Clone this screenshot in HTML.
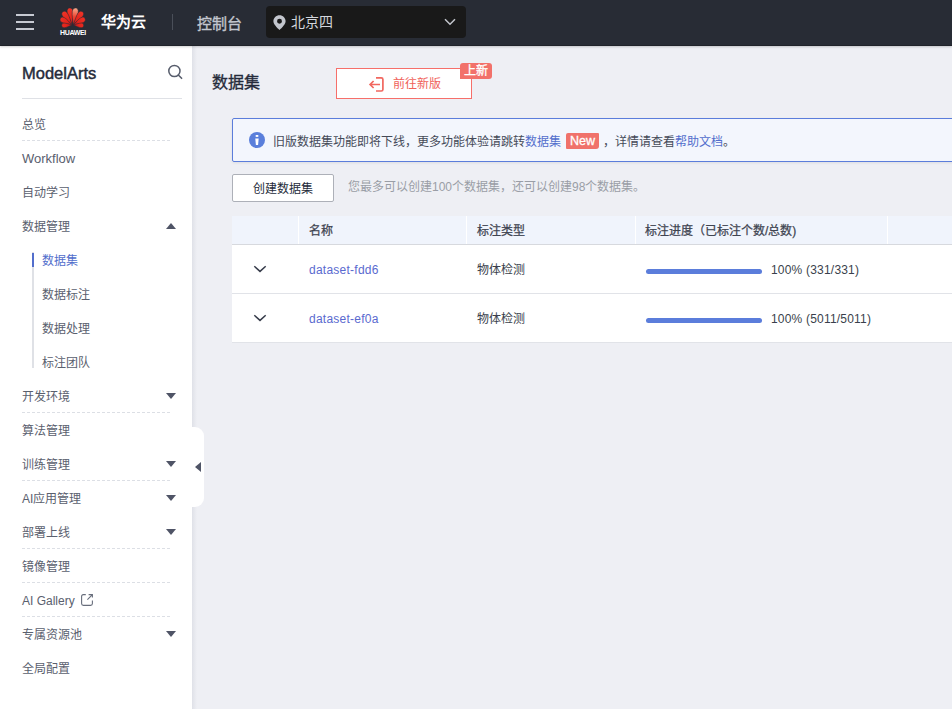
<!DOCTYPE html>
<html lang="zh-CN"><head><meta charset="utf-8">
<style>
*{margin:0;padding:0;box-sizing:border-box;}
html,body{width:952px;height:709px;overflow:hidden;}
body{font-family:"Liberation Sans",sans-serif;background:#eeeff4;position:relative;color:#252b3a;font-size:12px;}
.abs{position:absolute;white-space:nowrap;}
#hdr{position:absolute;left:0;top:0;width:952px;height:46px;background:#282c35;border-bottom:1px solid #20232a;box-shadow:0 1px 2px rgba(0,0,0,.18);z-index:5;}
#side{position:absolute;left:0;top:45px;width:192px;height:664px;background:#fff;z-index:3;}
#shadow{position:absolute;left:192px;top:45px;width:5px;height:664px;background:linear-gradient(to right,rgba(30,40,70,.07),rgba(30,40,70,0));z-index:2;}
.mi{position:absolute;white-space:nowrap;left:22px;font-size:12px;color:#5a606e;line-height:16px;}
.sub{left:42px;}
.dash{position:absolute;left:22px;width:148px;height:1px;background-image:linear-gradient(to right,#dcdfe5 60%,transparent 60%);background-size:5px 1px;}
.tri{position:absolute;left:166px;width:0;height:0;border-left:5px solid transparent;border-right:5px solid transparent;border-top:6px solid #4f5466;}
.triu{border-top:none;border-bottom:6px solid #4f5466;}
</style></head>
<body>
<div id="hdr">
  <div class="abs" style="left:16px;top:14px;width:18px;height:2px;background:#c7cad2;"></div>
  <div class="abs" style="left:16px;top:21px;width:18px;height:2px;background:#c7cad2;"></div>
  <div class="abs" style="left:16px;top:28px;width:18px;height:2px;background:#c7cad2;"></div>
  <svg class="abs" style="left:58px;top:6px;" width="30" height="23" viewBox="-14.7 -19 30 23">
    <defs>
      <linearGradient id="pg" x1="0" y1="-18" x2="0" y2="2" gradientUnits="userSpaceOnUse"><stop offset="0" stop-color="#f0382a"/><stop offset="0.6" stop-color="#e3231b"/><stop offset="1" stop-color="#b5121a"/></linearGradient>
      <linearGradient id="pt" x1="0" y1="-18" x2="0" y2="0" gradientUnits="userSpaceOnUse"><stop offset="0" stop-color="#f7b595"/><stop offset="0.55" stop-color="#ee4330"/><stop offset="1" stop-color="#dc2119"/></linearGradient>
    </defs>
    <g fill="url(#pg)" stroke="#282c35" stroke-width="0.5">
      <path d="M0,0 C-1.20,-5.16 -3.00,-9.46 -3.00,-13.07 C-3.00,-16.34 -1.35,-17.20 0,-17.20 C1.35,-17.20 3.00,-16.34 3.00,-13.07 C3.00,-9.46 1.20,-5.16 0,0Z" transform="translate(-0.5,0) rotate(-9)"/>
      <path d="M0,0 C-1.20,-5.16 -3.00,-9.46 -3.00,-13.07 C-3.00,-16.34 -1.35,-17.20 0,-17.20 C1.35,-17.20 3.00,-16.34 3.00,-13.07 C3.00,-9.46 1.20,-5.16 0,0Z" transform="translate(0.5,0) rotate(9)" fill="url(#pt)"/>
      <path d="M0,0 C-1.16,-4.86 -2.90,-8.91 -2.90,-12.31 C-2.90,-15.39 -1.30,-16.20 0,-16.20 C1.30,-16.20 2.90,-15.39 2.90,-12.31 C2.90,-8.91 1.16,-4.86 0,0Z" transform="translate(-0.5,0) rotate(-35)"/>
      <path d="M0,0 C-1.16,-4.86 -2.90,-8.91 -2.90,-12.31 C-2.90,-15.39 -1.30,-16.20 0,-16.20 C1.30,-16.20 2.90,-15.39 2.90,-12.31 C2.90,-8.91 1.16,-4.86 0,0Z" transform="translate(0.5,0) rotate(35)"/>
      <path d="M0,0 C-1.08,-4.05 -2.70,-7.43 -2.70,-10.26 C-2.70,-12.82 -1.22,-13.50 0,-13.50 C1.22,-13.50 2.70,-12.82 2.70,-10.26 C2.70,-7.43 1.08,-4.05 0,0Z" transform="translate(-0.5,0) rotate(-61)"/>
      <path d="M0,0 C-1.08,-4.05 -2.70,-7.43 -2.70,-10.26 C-2.70,-12.82 -1.22,-13.50 0,-13.50 C1.22,-13.50 2.70,-12.82 2.70,-10.26 C2.70,-7.43 1.08,-4.05 0,0Z" transform="translate(0.5,0) rotate(61)"/>
      <path d="M0,0 C-0.92,-3.15 -2.30,-5.78 -2.30,-7.98 C-2.30,-9.97 -1.03,-10.50 0,-10.50 C1.03,-10.50 2.30,-9.97 2.30,-7.98 C2.30,-5.78 0.92,-3.15 0,0Z" transform="translate(-0.5,0) rotate(-93)"/>
      <path d="M0,0 C-0.92,-3.15 -2.30,-5.78 -2.30,-7.98 C-2.30,-9.97 -1.03,-10.50 0,-10.50 C1.03,-10.50 2.30,-9.97 2.30,-7.98 C2.30,-5.78 0.92,-3.15 0,0Z" transform="translate(0.5,0) rotate(93)"/>
    </g>
  </svg>
  <div class="abs" style="left:59px;top:29px;width:28px;text-align:center;font-size:7px;font-weight:bold;color:#fff;line-height:8px;letter-spacing:-0.35px;">HUAWEI</div>
  <div class="abs" style="left:101px;top:12px;font-size:15px;font-weight:bold;color:#fff;line-height:20px;">华为云</div>
  <div class="abs" style="left:172px;top:14px;width:1px;height:16px;background:#4a4f59;"></div>
  <div class="abs" style="left:197px;top:14px;font-size:15px;font-weight:500;-webkit-text-stroke:0.35px #c3c7cf;color:#c3c7cf;line-height:20px;">控制台</div>
  <div class="abs" style="left:266px;top:6px;width:200px;height:32px;background:#191919;border-radius:4px;">
    <svg class="abs" style="left:7px;top:8.5px;" width="13" height="15" viewBox="0 0 12 14"><path d="M6,0.2 C2.8,0.2 0.3,2.7 0.3,5.8 C0.3,9.2 6,13.9 6,13.9 C6,13.9 11.7,9.2 11.7,5.8 C11.7,2.7 9.2,0.2 6,0.2Z M6,3.5 A2.3,2.3 0 1 1 6,8.1 A2.3,2.3 0 1 1 6,3.5Z" fill="#c3c6cd" fill-rule="evenodd"/></svg>
    <div class="abs" style="left:25px;top:6px;font-size:14px;color:#d3d6dc;line-height:20px;">北京四</div>
    <svg class="abs" style="left:178px;top:12px;" width="12" height="8" viewBox="0 0 12 8"><path d="M1,1.2 L6,6.2 L11,1.2" fill="none" stroke="#c3c6cd" stroke-width="1.5"/></svg>
  </div>
</div>

<div id="side">
  <div class="abs" style="left:22px;top:18px;font-size:16.5px;-webkit-text-stroke:0.45px #252b3a;color:#252b3a;line-height:20px;">ModelArts</div>
  <svg class="abs" style="left:166px;top:19px;" width="17" height="17" viewBox="0 0 17 17"><circle cx="8.4" cy="7" r="5.6" fill="none" stroke="#575d6c" stroke-width="1.5"/><path d="M12.3,11 L15.6,14.3" stroke="#575d6c" stroke-width="1.6" stroke-linecap="round"/></svg>
  <div class="abs" style="left:22px;top:53px;width:160px;height:1px;background:#dfe1e6;"></div>
</div>
<div id="shadow"></div>
<div style="position:absolute;left:0;top:0;z-index:4">
<div class="mi" style="top:117px;">总览</div>
<div class="dash" style="top:140px;"></div>
<div class="mi" style="top:151px;font-size:13px;">Workflow</div>
<div class="mi" style="top:185px;">自动学习</div>
<div class="mi" style="top:219px;">数据管理</div>
<div class="tri triu" style="top:223px;"></div>
<div class="mi sub" style="top:253px;color:#526ecc;">数据集</div>
<div class="mi sub" style="top:287px;">数据标注</div>
<div class="mi sub" style="top:321px;">数据处理</div>
<div class="mi sub" style="top:355px;">标注团队</div>
<div class="mi" style="top:389px;">开发环境</div>
<div class="tri" style="top:393px;"></div>
<div class="dash" style="top:412px;"></div>
<div class="mi" style="top:423px;">算法管理</div>
<div class="mi" style="top:457px;">训练管理</div>
<div class="tri" style="top:461px;"></div>
<div class="dash" style="top:480px;"></div>
<div class="mi" style="top:491px;">AI应用管理</div>
<div class="tri" style="top:495px;"></div>
<div class="mi" style="top:525px;">部署上线</div>
<div class="tri" style="top:529px;"></div>
<div class="dash" style="top:548px;"></div>
<div class="mi" style="top:559px;">镜像管理</div>
<div class="dash" style="top:582px;"></div>
<div class="mi" style="top:593px;">AI Gallery</div><svg class="abs" style="left:81px;top:594px;" width="12" height="12" viewBox="0 0 12 12"><path d="M4.8,0.6 H2.4 Q0.6,0.6 0.6,2.4 V9.6 Q0.6,11.4 2.4,11.4 H9.6 Q11.4,11.4 11.4,9.6 V6.6" fill="none" stroke="#686e7c" stroke-width="1.1"/><path d="M7.6,0.6 H11.4 V3.6 M11.4,0.6 L6.4,5.6" fill="none" stroke="#686e7c" stroke-width="1.1"/></svg>
<div class="dash" style="top:616px;"></div>
<div class="mi" style="top:627px;">专属资源池</div>
<div class="tri" style="top:631px;"></div>
<div class="mi" style="top:661px;">全局配置</div>
</div>
<div class="abs" style="left:32px;top:252px;width:2px;height:116px;background:#dfe1e6;z-index:4"></div>
<div class="abs" style="left:32px;top:253px;width:2px;height:14px;background:#526ecc;z-index:4"></div>
<div class="abs" style="left:186px;top:427px;width:18px;height:80px;background:#fff;border-radius:0 9px 9px 0;z-index:4"></div>
<div class="abs" style="left:195px;top:462px;width:0;height:0;border-top:5px solid transparent;border-bottom:5px solid transparent;border-right:6px solid #4f5466;z-index:4"></div>

<div id="main" style="position:absolute;left:0;top:0;z-index:1;">
  <div class="abs" style="left:212px;top:72px;font-size:16px;font-weight:500;-webkit-text-stroke:0.35px #252b3a;color:#252b3a;line-height:22px;">数据集</div>
  <div class="abs" style="left:336px;top:68px;width:136px;height:31px;border:1px solid #f66f6a;background:#fff;"></div>
  <svg class="abs" style="left:368px;top:76px;" width="16" height="16" viewBox="0 0 16 16"><path d="M8,1.9 H13.3 Q14.9,1.9 14.9,3.5 V13.4 Q14.9,15 13.3,15 H8" fill="none" stroke="#f1675f" stroke-width="1.7"/><path d="M12,8.5 H2.2 M5.6,5 L2.1,8.5 L5.6,12" fill="none" stroke="#f1675f" stroke-width="1.7"/></svg>
  <div class="abs" style="left:393px;top:76px;font-size:12px;color:#f0625a;line-height:16px;">前往新版</div>
  <div class="abs" style="left:460px;top:63px;width:32px;height:16px;background:#f2716a;border-radius:3px 3px 3px 0;color:#fff;font-size:12px;-webkit-text-stroke:0.3px #fff;line-height:16px;text-align:center;">上新</div>

  <div class="abs" style="left:232px;top:118px;width:740px;height:44px;border:1px solid #5b7ddb;background:#f3f6fd;border-radius:2px;box-shadow:0 1px 3px rgba(0,0,0,.08);">
    <svg class="abs" style="left:16px;top:13px;" width="16" height="16" viewBox="0 0 16 16"><circle cx="8" cy="8" r="8" fill="#5a7fdb"/><rect x="6.7" y="3" width="2.6" height="1.9" fill="#fff"/><path d="M6.3,6.6 H9.7 L9.1,12.9 H6.9Z" fill="#fff"/></svg>
    <div class="abs" style="left:40px;top:14px;font-size:12px;color:#454a58;line-height:16px;">旧版数据集功能即将下线，更多功能体验请跳转<span style="color:#526ecc">数据集</span><span style="display:inline-block;margin:0 4px 0 5px;width:33px;height:16px;background:#f0726b;color:#fff;font-size:12.5px;-webkit-text-stroke:0.3px #fff;line-height:16px;text-align:center;border-radius:2px 1px 3px 1px;vertical-align:1px;">New</span>，详情请查看<span style="color:#526ecc">帮助文档</span>。</div>
  </div>

  <div class="abs" style="left:232px;top:174px;width:102px;height:28px;border:1px solid #adb0b8;background:#fff;border-radius:2px;"></div>
  <div class="abs" style="left:253px;top:181px;font-size:12px;color:#252b3a;line-height:16px;">创建数据集</div>
  <div class="abs" style="left:348px;top:179px;font-size:12px;color:#9a9ea6;line-height:16px;">您最多可以创建100个数据集，还可以创建98个数据集。</div>

  <div class="abs" style="left:232px;top:216px;width:720px;height:127px;background:#fff;"></div>
  <div class="abs" style="left:232px;top:216px;width:720px;height:28px;background:#f0f4fc;"></div>
  <div class="abs" style="left:232px;top:244px;width:720px;height:1px;background:#d7d9de;"></div>
  <div class="abs" style="left:298px;top:216px;width:1px;height:28px;background:#fff;"></div>
  <div class="abs" style="left:466px;top:216px;width:1px;height:28px;background:#fff;"></div>
  <div class="abs" style="left:635px;top:216px;width:1px;height:28px;background:#fff;"></div>
  <div class="abs" style="left:887px;top:216px;width:1px;height:28px;background:#fff;"></div>
  <div class="abs" style="left:309px;top:223px;font-size:12px;font-weight:500;-webkit-text-stroke:0.25px #3f4451;color:#3f4451;line-height:16px;">名称</div>
  <div class="abs" style="left:477px;top:223px;font-size:12px;font-weight:500;-webkit-text-stroke:0.25px #3f4451;color:#3f4451;line-height:16px;">标注类型</div>
  <div class="abs" style="left:645px;top:223px;font-size:12px;font-weight:500;-webkit-text-stroke:0.25px #3f4451;color:#3f4451;line-height:16px;">标注进度（已标注个数/总数)</div>

  <div class="abs" style="left:232px;top:293px;width:720px;height:1px;background:#e1e3e8;"></div>
  <div class="abs" style="left:232px;top:342px;width:720px;height:1px;background:#e1e3e8;"></div>

  <svg class="abs" style="left:253px;top:265px;" width="14" height="9" viewBox="0 0 14 9"><path d="M1.3,1.2 L7,6.4 L12.7,1.2" fill="none" stroke="#363b4a" stroke-width="1.5"/></svg>
  <div class="abs" style="left:309px;top:262px;font-size:12px;color:#5a6acf;letter-spacing:0.25px;line-height:16px;">dataset-fdd6</div>
  <div class="abs" style="left:477px;top:262px;font-size:12px;color:#3a3f4c;line-height:16px;">物体检测</div>
  <div class="abs" style="left:646px;top:269px;width:116px;height:5px;background:#5b7ddb;border-radius:3px;"></div>
  <div class="abs" style="left:771px;top:262px;font-size:12px;color:#3a3f4c;letter-spacing:0.2px;line-height:16px;">100% (331/331)</div>

  <svg class="abs" style="left:253px;top:314px;" width="14" height="9" viewBox="0 0 14 9"><path d="M1.3,1.2 L7,6.4 L12.7,1.2" fill="none" stroke="#363b4a" stroke-width="1.5"/></svg>
  <div class="abs" style="left:309px;top:311px;font-size:12px;color:#5a6acf;letter-spacing:0.25px;line-height:16px;">dataset-ef0a</div>
  <div class="abs" style="left:477px;top:311px;font-size:12px;color:#3a3f4c;line-height:16px;">物体检测</div>
  <div class="abs" style="left:646px;top:318px;width:116px;height:5px;background:#5b7ddb;border-radius:3px;"></div>
  <div class="abs" style="left:771px;top:311px;font-size:12px;color:#3a3f4c;letter-spacing:0.2px;line-height:16px;">100% (5011/5011)</div>
</div>
</body></html>
